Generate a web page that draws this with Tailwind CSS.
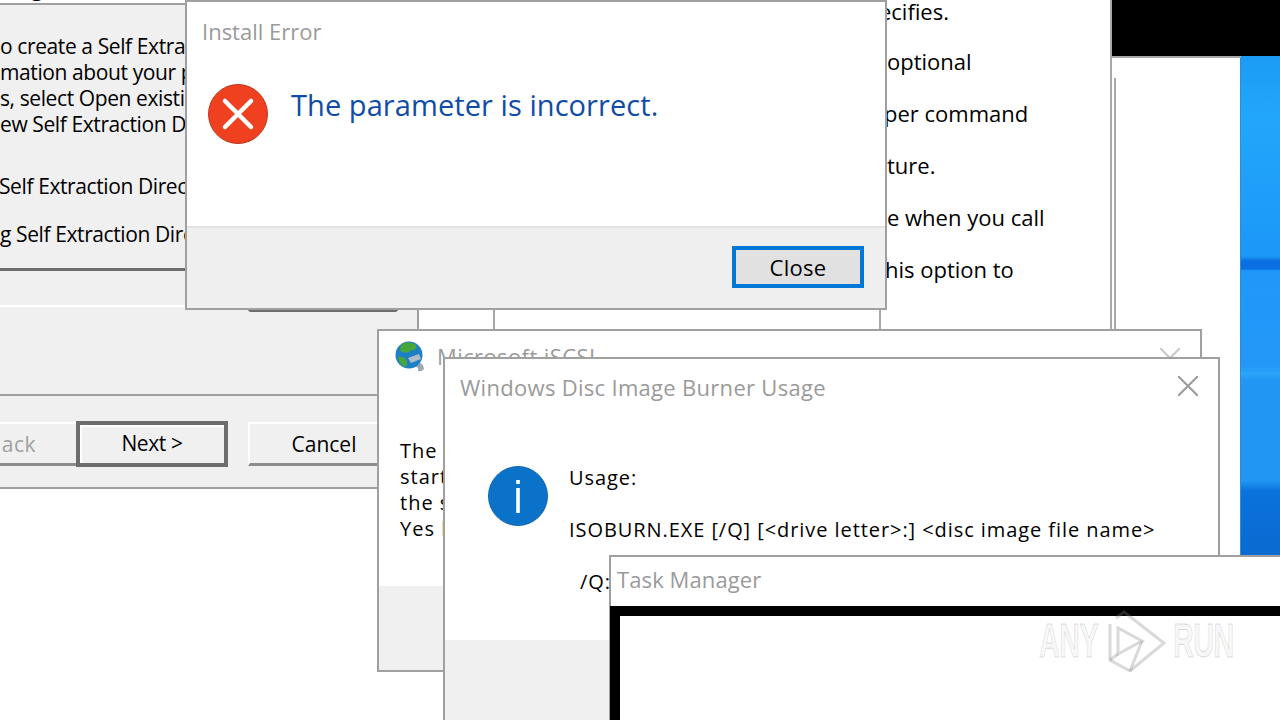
<!DOCTYPE html>
<html lang="en">
<head>
<meta charset="UTF-8">
<title>Install Error</title>
<script src="https://cdn.jsdelivr.net/npm/@tailwindcss/browser@4"></script>
</head>
<body class="m-0">
<div class="relative w-[1280px] h-[720px] overflow-hidden bg-white font-['Open_Sans',sans-serif] text-black">

  <!-- desktop wallpaper strip -->
  <div class="absolute left-[1240px] top-[56px] w-[40px] h-[500px] border-l border-[#3b8ac4] bg-[linear-gradient(180deg,#1b9bf5_0%,#22a6fb_12%,#1c98f8_40%,#0b6fe2_41%,#0b6fe2_42.5%,#2098fa_43%,#2398f8_62%,#2aa6f8_63.5%,#2196f3_65%,#2196f3_85%,#0a72dc_87%,#0a6ad0_100%)]"></div>
  <div class="absolute left-[1111px] top-0 w-[169px] h-[56px] bg-black"></div>
  <div class="absolute left-[1111px] top-[56px] w-[130px] h-[2px] bg-[#a8a8a8]"></div>

  <!-- rear help window -->
  <div class="absolute left-[493px] top-0 w-[619px] h-[340px] bg-white border-x-2 border-[#a8a8a8]">
    <div class="absolute left-[384px] top-0 bottom-0 w-[2px] bg-[#a8a8a8]"></div>
    <div class="pl-[392px] text-[22px] leading-[52px] whitespace-nowrap">
      <p class="-ml-[32px] leading-[22px] mb-[13px]">specifies.</p>
      <p>optional</p>
      <p class="-ml-[3px]">per command</p>
      <p>ture.</p>
      <p>e when you call</p>
      <p class="-ml-[2px]">his option to</p>
    </div>
  </div>
  <div class="absolute left-[1114px] top-[78px] w-[2px] h-[260px] bg-[#a8a8a8]"></div>

  <!-- setup wizard -->
  <div class="absolute -left-[2px] top-0 w-[421px] h-[489px] flex flex-col bg-[#f0f0f0] border-r-2 border-b-2 border-[#a0a0a0] text-[21px] tracking-[-0.4px]">
    <div class="h-[5px] shrink-0 w-[405px] bg-white border-b-2 border-[#a0a0a0] relative overflow-hidden">
      <div class="absolute left-[195px] top-0 w-[97px] h-[3px] bg-[#d9d9d9]"></div>
      <span class="absolute left-[33px] -top-[26px] leading-[26px] text-[22px]">g</span>
    </div>
    <div class="h-[266px] shrink-0 border-b-[3px] border-[#6d6d6d] pl-[2px] pt-[28px] leading-[26px] whitespace-nowrap">
      <div class="w-[186px] overflow-hidden">
        <p>o create a Self Extraction</p>
        <p>mation about your package</p>
        <p>s, select Open existing</p>
        <p>ew Self Extraction Directive</p>
        <p class="mt-[36px] -ml-[1px]">Self Extraction Directive</p>
        <p class="mt-[22px]">g Self Extraction Directive</p>
      </div>
    </div>
    <div class="h-[36px] shrink-0 border-b-2 border-white"></div>
    <div class="h-[89px] shrink-0 border-b-2 border-[#a0a0a0]"></div>
    <div class="flex items-start pt-[26px] leading-[40px]">
      <div class="w-[78px] h-[44px] border-b-[3px] border-[#8c8c8c] border-t-2 border-t-white text-[#a0a0a0] text-right pr-[40px] tracking-[0.5px]">ack</div>
      <div class="w-[152px] h-[46px] -mt-[1px] border-[4px] border-[#6d6d6d] text-center leading-[36px] shadow-[inset_2px_2px_0_#fff]">Next &gt;</div>
      <div class="ml-[20px] w-[150px] h-[44px] border-b-[3px] border-[#8c8c8c] border-t-2 border-l-2 border-t-white border-l-white text-center tracking-[0px]">Cancel</div>
    </div>
  </div>
  <div class="absolute left-[248px] top-[309px] w-[150px] h-[3px] rounded-b-sm bg-[#6d6d6d]"></div>

  <!-- install error dialog -->
  <div class="absolute left-[185px] top-0 w-[702px] h-[310px] flex flex-col bg-white border-2 border-[#a0a0a0]">
    <div class="pl-[15px] pt-[13px] text-[22px] leading-[32px] text-[#9a9a9a]">Install Error</div>
    <div class="flex-1 flex items-start pl-[21px] pt-[8px]">
      <svg class="w-[60px] h-[60px] mt-[29px]" viewBox="0 0 60 60">
        <circle cx="30" cy="30" r="29.5" fill="#ef411f" stroke="#b93a22" stroke-width="1"/>
        <path d="M17 17L43 43M43 17L17 43" stroke="#fff" stroke-width="4.5" stroke-linecap="round"/>
      </svg>
      <div class="ml-[23px] mt-[30px] text-[29px] leading-[40px] tracking-[0.07px] text-[#0f4ca8]">The parameter is incorrect.</div>
    </div>
    <div class="h-[82px] bg-[#efefef] border-t-2 border-[#e2e2e2] flex justify-end items-start pt-[18px] pr-[21px]">
      <div class="w-[132px] h-[42px] border-[4px] border-[#0078d7] bg-[#e1e1e1] text-center text-[22px] leading-[34px] tracking-[0.3px]">Close</div>
    </div>
  </div>

  <!-- iscsi dialog -->
  <div class="absolute left-[377px] top-[329px] w-[825px] h-[343px] flex flex-col bg-white border-2 border-[#a0a0a0]">
    <div class="flex items-center pl-[15px] pt-[10px]">
      <svg class="w-[32px] h-[32px]" viewBox="0 0 32 32">
        <path d="M18 24Q26 26 24 30Q28 31 30 28Q30 22 22 21Z" fill="#9aa8b4"/>
        <circle cx="15" cy="14" r="13.5" fill="#1d7fc4"/>
        <path d="M8 3Q16 -1 22 4Q24 9 18 9Q14 13 8 11Q4 9 8 3ZM4 16Q10 15 13 20Q14 25 11 26Q5 23 4 16Z" fill="#46a63c"/>
        <path d="M14 17L25 13L27 18L17 22Z" fill="#aebcc8"/>
      </svg>
      <span class="ml-[11px] text-[22px] leading-[32px] text-[#9a9a9a] tracking-[0.4px] -mt-[2px]">Microsoft iSCSI</span>
    </div>
    <div class="pl-[21px] pt-[65px] text-[20px] leading-[26px] tracking-[1px] whitespace-nowrap h-[213px]">
      <p>The Microsoft</p>
      <p>started</p>
      <p>the service</p>
      <p>Yes button</p>
    </div>
    <div class="flex-1 bg-[#f0f0f0]"></div>
    <svg class="absolute left-[781px] top-[17px] w-[20px] h-[20px]" viewBox="0 0 20 20"><path d="M0 0L20 20M20 0L0 20" stroke="#c8c8c8" stroke-width="2"/></svg>
  </div>

  <!-- disc image burner dialog -->
  <div class="absolute left-[443px] top-[357px] w-[777px] h-[380px] flex flex-col bg-white border-2 border-[#a0a0a0]">
    <div class="pl-[15px] pt-[12px] pb-[1px] text-[22px] leading-[32px] text-[#9a9a9a] tracking-[0.3px]">Windows Disc Image Burner Usage</div>
    <div class="flex pl-[43px] pt-[31px] h-[236px]">
      <svg class="w-[60px] h-[60px] shrink-0 mt-[31px]" viewBox="0 0 60 60">
        <circle cx="30" cy="30" r="29.5" fill="#0a72c9" stroke="#1667ad" stroke-width="1"/>
        <rect x="28.2" y="14" width="3.6" height="4" fill="#fff"/>
        <rect x="28.2" y="22" width="3.6" height="25" fill="#fff"/>
      </svg>
      <div class="ml-[21px] mt-[30px] text-[20px] leading-[26px] tracking-[0.93px] whitespace-nowrap">
        <p>Usage:</p>
        <p class="mt-[26px]">ISOBURN.EXE [/Q] [&lt;drive letter&gt;:] &lt;disc image file name&gt;</p>
        <p class="mt-[26px] ml-[11px]">/Q: Quiet mode</p>
      </div>
    </div>
    <div class="flex-1 bg-[#f0f0f0]"></div>
    <svg class="absolute left-[733px] top-[17px] w-[20px] h-[20px]" viewBox="0 0 20 20"><path d="M0 0L20 20M20 0L0 20" stroke="#9a9a9a" stroke-width="2"/></svg>
  </div>

  <!-- task manager -->
  <div class="absolute left-[609px] top-[555px] w-[680px] h-[175px] flex flex-col bg-white border-2 border-[#a0a0a0]">
    <div class="h-[49px] pl-[6px] pt-[6px] text-[22px] leading-[32px] text-[#9a9a9a] tracking-[0.1px]">Task Manager</div>
    <div class="flex-1 border-l-[10px] border-t-[10px] border-black bg-white -ml-[1px]"></div>
  </div>

  <!-- watermark -->
  <div class="absolute left-[1039px] top-[610px] flex items-center h-[62px] text-[48px] leading-[62px] font-bold text-black/5 [-webkit-text-stroke:1px_#00000028] font-['Liberation_Sans',sans-serif] tracking-[-1px]">
    <span class="inline-block scale-x-[0.6] origin-left w-[69px]">ANY</span>
    <svg class="w-[58px] h-[62px] shrink-0" viewBox="0 0 58 62" fill="none" stroke="#808080" stroke-opacity="0.3" stroke-width="3"><path d="M2 14V50L22 61L56 33L16 2L8 8M10 18V44L34 31Z"/><path d="M2 50L10 44M22 61L34 31"/></svg>
    <span class="inline-block scale-x-[0.6] origin-left w-[62px] ml-[7px]">RUN</span>
  </div>
</div>
</body>
</html>
